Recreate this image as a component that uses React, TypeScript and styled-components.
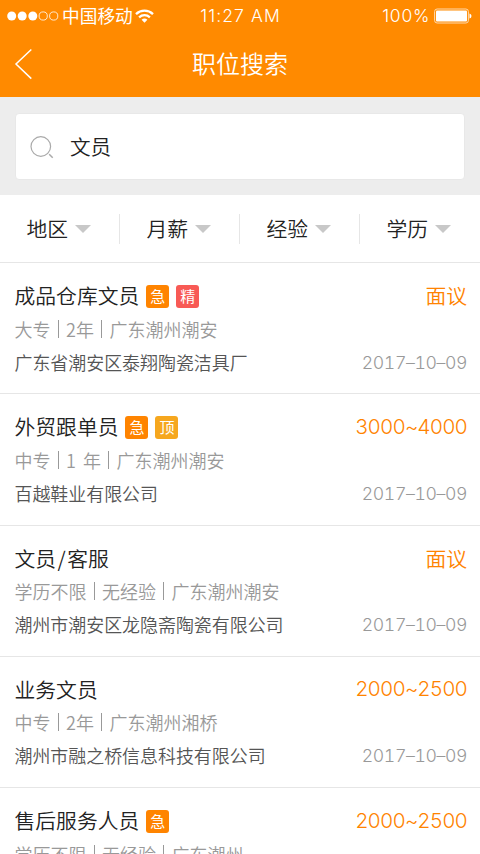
import React from "react";
import styled, { createGlobalStyle } from "styled-components";

const Global = createGlobalStyle`
  * { box-sizing: border-box; }
  html, body { margin: 0; padding: 0; height: 854px; overflow: hidden; background: #fff; }
  body { font-family: "Noto Sans CJK SC", sans-serif; font-weight: 350; }
`;

const Screen = styled.main`
  width: 480px;
  height: 854px;
  overflow: hidden;
  background: #fff;
`;

const Header = styled.header`
  height: 97px;
  background: #ff8a00;
  color: #fff;
`;

const StatusBar = styled.div`
  display: grid;
  grid-template-columns: 1fr auto 1fr;
  align-items: center;
  height: 31px;
  padding: 0 8px 0 7px;
`;

const StatusGroup = styled.div<{ $end?: boolean }>`
  display: flex;
  align-items: center;
  gap: ${(p) => (p.$end ? 4 : 0)}px;
  justify-content: ${(p) => (p.$end ? "flex-end" : "flex-start")};
`;

const Carrier = styled.span`
  margin: 0 2px 2px 3px;
  font-size: 17.7px;
  font-weight: 400;
  line-height: 28px;
`;

const StatusText = styled.span<{ $spacing: number }>`
  padding-left: 2px;
  font-family: "Inter", sans-serif;
  font-size: 17.5px;
  font-weight: 350;
  line-height: 30px;
  letter-spacing: ${(p) => p.$spacing}px;
`;

const NavBar = styled.div`
  display: grid;
  grid-template-columns: 60px 1fr 60px;
  align-items: center;
  height: 65px;
`;

const BackButton = styled.button`
  display: flex;
  padding: 0 0 0 14px;
  border: 0;
  background: none;
  color: inherit;
`;

const PageTitle = styled.h1`
  margin: 0;
  padding-bottom: 1px;
  font-size: 24px;
  font-weight: 350;
  line-height: 36px;
  text-align: center;
`;

const SearchArea = styled.section`
  height: 98px;
  padding: 16px 15px 15px;
  background: #ededed;
`;

const SearchBox = styled.div`
  display: flex;
  align-items: center;
  height: 67px;
  padding-left: 14px;
  border: 1px solid #e8e8e8;
  border-radius: 4px;
  background: #fff;
`;

const SearchText = styled.span`
  margin: 0 0 2px 16px;
  color: #222;
  font-size: 20.6px;
  line-height: 30px;
`;

const Filters = styled.nav`
  display: grid;
  grid-template-columns: repeat(4, 1fr);
  align-items: center;
  height: 68px;
  border-bottom: 1px solid #e6e6e6;
`;

const Filter = styled.div`
  display: flex;
  align-items: center;
  gap: 7px;
  height: 30px;
  padding-left: 26.5px;
  color: #222;
  font-size: 20.8px;
  line-height: 28px;
  &:not(:last-child) { border-right: 1px solid #e6e6e6; }
`;

const FilterLabel = styled.span`
  padding-bottom: 2px;
`;

const Job = styled.article`
  height: 131.25px;
  padding: 15px 13px 0 14.5px;
  border-bottom: 1px solid #e6e6e6;
`;

const JobLine = styled.div<{ $h: number }>`
  display: flex;
  align-items: center;
  height: ${(p) => p.$h}px;
  white-space: nowrap;
`;

const JobTitle = styled.h2`
  margin: 0 7px 0 0;
  color: #222;
  font-size: 20.8px;
  font-weight: 350;
  line-height: 32px;
`;

const Slash = styled.span`
  margin: 0 1.5px;
`;

const Tag = styled.span<{ $color: string }>`
  width: 23px;
  height: 23px;
  margin: 3px 7px 0 0;
  border-radius: 3px;
  background: ${(p) => p.$color};
  color: #fff;
  font-size: 15px;
  font-weight: 400;
  line-height: 21px;
  text-align: center;
`;

const Salary = styled.span<{ $latin: boolean }>`
  margin-left: auto;
  padding-top: ${(p) => (p.$latin ? 1 : 0)}px;
  color: #ff8300;
  font-family: ${(p) => (p.$latin ? '"Inter", sans-serif' : "inherit")};
  font-size: ${(p) => (p.$latin ? 20.6 : 20.8)}px;
  font-variant-numeric: tabular-nums;
  letter-spacing: ${(p) => (p.$latin ? -0.9 : 0)}px;
  font-weight: 350;
  line-height: 32px;
`;

const Meta = styled.div`
  display: flex;
  align-items: center;
  color: #999;
  font-size: 18px;
  line-height: 30px;
  word-spacing: 3px;
`;

const MetaItem = styled.span`
  & + & {
    display: flex;
    align-items: center;
  }
  & + &::before {
    content: "";
    width: 1px;
    height: 18px;
    margin: 0 7.5px 0 7px;
    background: #999;
  }
`;

const Company = styled.span`
  color: #555;
  font-size: 17.95px;
  line-height: 30px;
`;

const PostedOn = styled.time`
  margin-left: auto;
  padding-top: 2px;
  color: #999;
  font-family: "Inter", sans-serif;
  font-size: 17.7px;
  font-variant-numeric: tabular-nums;
  font-weight: 350;
  line-height: 30px;
  letter-spacing: -0.4px;
`;

const Signal = () => (
  <svg width="52" height="12" viewBox="0 0 52 12">
    {[4.7, 15.2, 25.8].map((x) => (
      <circle key={x} cx={x} cy="6" r="4.5" fill="#fff" />
    ))}
    {[36.2, 46.7].map((x) => (
      <circle key={x} cx={x} cy="6" r="4.1" fill="none" stroke="#fff" strokeWidth="0.8" />
    ))}
  </svg>
);

const Wifi = () => (
  <svg width="19" height="14" viewBox="0 0 19 14" fill="none" stroke="#fff" strokeWidth="2.3">
    <path d="M1 5.1C5.8.5 13.2.5 18 5.1" />
    <path d="M4.1 8.3c3.1-2.8 7.7-2.8 10.8 0" />
    <path d="M6.6 10.7C8.3 9.2 10.7 9.2 12.4 10.7L9.5 13.7Z" fill="#fff" stroke="none" />
  </svg>
);

const Battery = () => (
  <svg width="38" height="16" viewBox="0 0 38 16">
    <rect x="0.6" y="1" width="33.8" height="14" rx="2.5" fill="none" stroke="#ffd9ad" strokeWidth="1" />
    <rect x="2" y="2.4" width="31" height="11.2" rx="1" fill="#fff" />
    <path d="M35.5 5.5q2 .5 2 2.5t-2 2.5z" fill="#fff" />
  </svg>
);

const BackIcon = () => (
  <svg width="19" height="32" viewBox="0 0 19 32" fill="none" stroke="#fff" strokeWidth="1.5">
    <path d="M17.3 1.5 2 16l15.3 14.6" />
  </svg>
);

const SearchIcon = () => (
  <svg width="24" height="24" viewBox="0 0 24 24" fill="none" stroke="#aaa" strokeWidth="1.2">
    <circle cx="10.8" cy="11.5" r="9.8" />
    <path d="m19.2 19.3 3.5 3.5" strokeWidth="1.5" />
  </svg>
);

const Caret = () => (
  <svg width="16" height="8" viewBox="0 0 16 8">
    <path d="M0 0h16L8 8z" fill="#c8c8c8" />
  </svg>
);

const TAG_COLORS: Record<string, string> = { 急: "#ff8400", 精: "#f85a55", 顶: "#f6a71e" };

const jobs = [
  { title: "成品仓库文员", tags: ["急", "精"], salary: "面议", meta: ["大专", "2年", "广东潮州潮安"], company: "广东省潮安区泰翔陶瓷洁具厂" },
  { title: "外贸跟单员", tags: ["急", "顶"], salary: "3000~4000", meta: ["中专", "1 年", "广东潮州潮安"], company: "百越鞋业有限公司" },
  { title: "文员/客服", tags: [], salary: "面议", meta: ["学历不限", "无经验", "广东潮州潮安"], company: "潮州市潮安区龙隐斋陶瓷有限公司" },
  { title: "业务文员", tags: [], salary: "2000~2500", meta: ["中专", "2年", "广东潮州湘桥"], company: "潮州市融之桥信息科技有限公司" },
  { title: "售后服务人员", tags: ["急"], salary: "2000~2500", meta: ["学历不限", "无经验", "广东潮州"], company: "" },
];

export default function App() {
  return (
    <Screen>
      <Global />
      <Header>
        <StatusBar>
          <StatusGroup>
            <Signal />
            <Carrier>中国移动</Carrier>
            <Wifi />
          </StatusGroup>
          <StatusText $spacing={1.1}>11:27 AM</StatusText>
          <StatusGroup $end>
            <StatusText $spacing={0.7}>100%</StatusText>
            <Battery />
          </StatusGroup>
        </StatusBar>
        <NavBar>
          <BackButton aria-label="返回">
            <BackIcon />
          </BackButton>
          <PageTitle>职位搜索</PageTitle>
        </NavBar>
      </Header>
      <SearchArea>
        <SearchBox>
          <SearchIcon />
          <SearchText>文员</SearchText>
        </SearchBox>
      </SearchArea>
      <Filters>
        {["地区", "月薪", "经验", "学历"].map((label) => (
          <Filter key={label}>
            <FilterLabel>{label}</FilterLabel>
            <Caret />
          </Filter>
        ))}
      </Filters>
      {jobs.map((job) => (
        <Job key={job.title}>
          <JobLine $h={34}>
            <JobTitle>
              {job.title.split("/").map((part, i) => (
                <React.Fragment key={part}>
                  {i > 0 && <Slash>/</Slash>}
                  {part}
                </React.Fragment>
              ))}
            </JobTitle>
            {job.tags.map((tag) => (
              <Tag key={tag} $color={TAG_COLORS[tag]}>
                {tag}
              </Tag>
            ))}
            <Salary $latin={job.salary !== "面议"}>{job.salary}</Salary>
          </JobLine>
          <JobLine $h={33}>
            <Meta>
              {job.meta.map((item) => (
                <MetaItem key={item}>{item}</MetaItem>
              ))}
            </Meta>
          </JobLine>
          {job.company && (
            <JobLine $h={33}>
              <Company>{job.company}</Company>
              <PostedOn>2017–10–09</PostedOn>
            </JobLine>
          )}
        </Job>
      ))}
    </Screen>
  );
}
